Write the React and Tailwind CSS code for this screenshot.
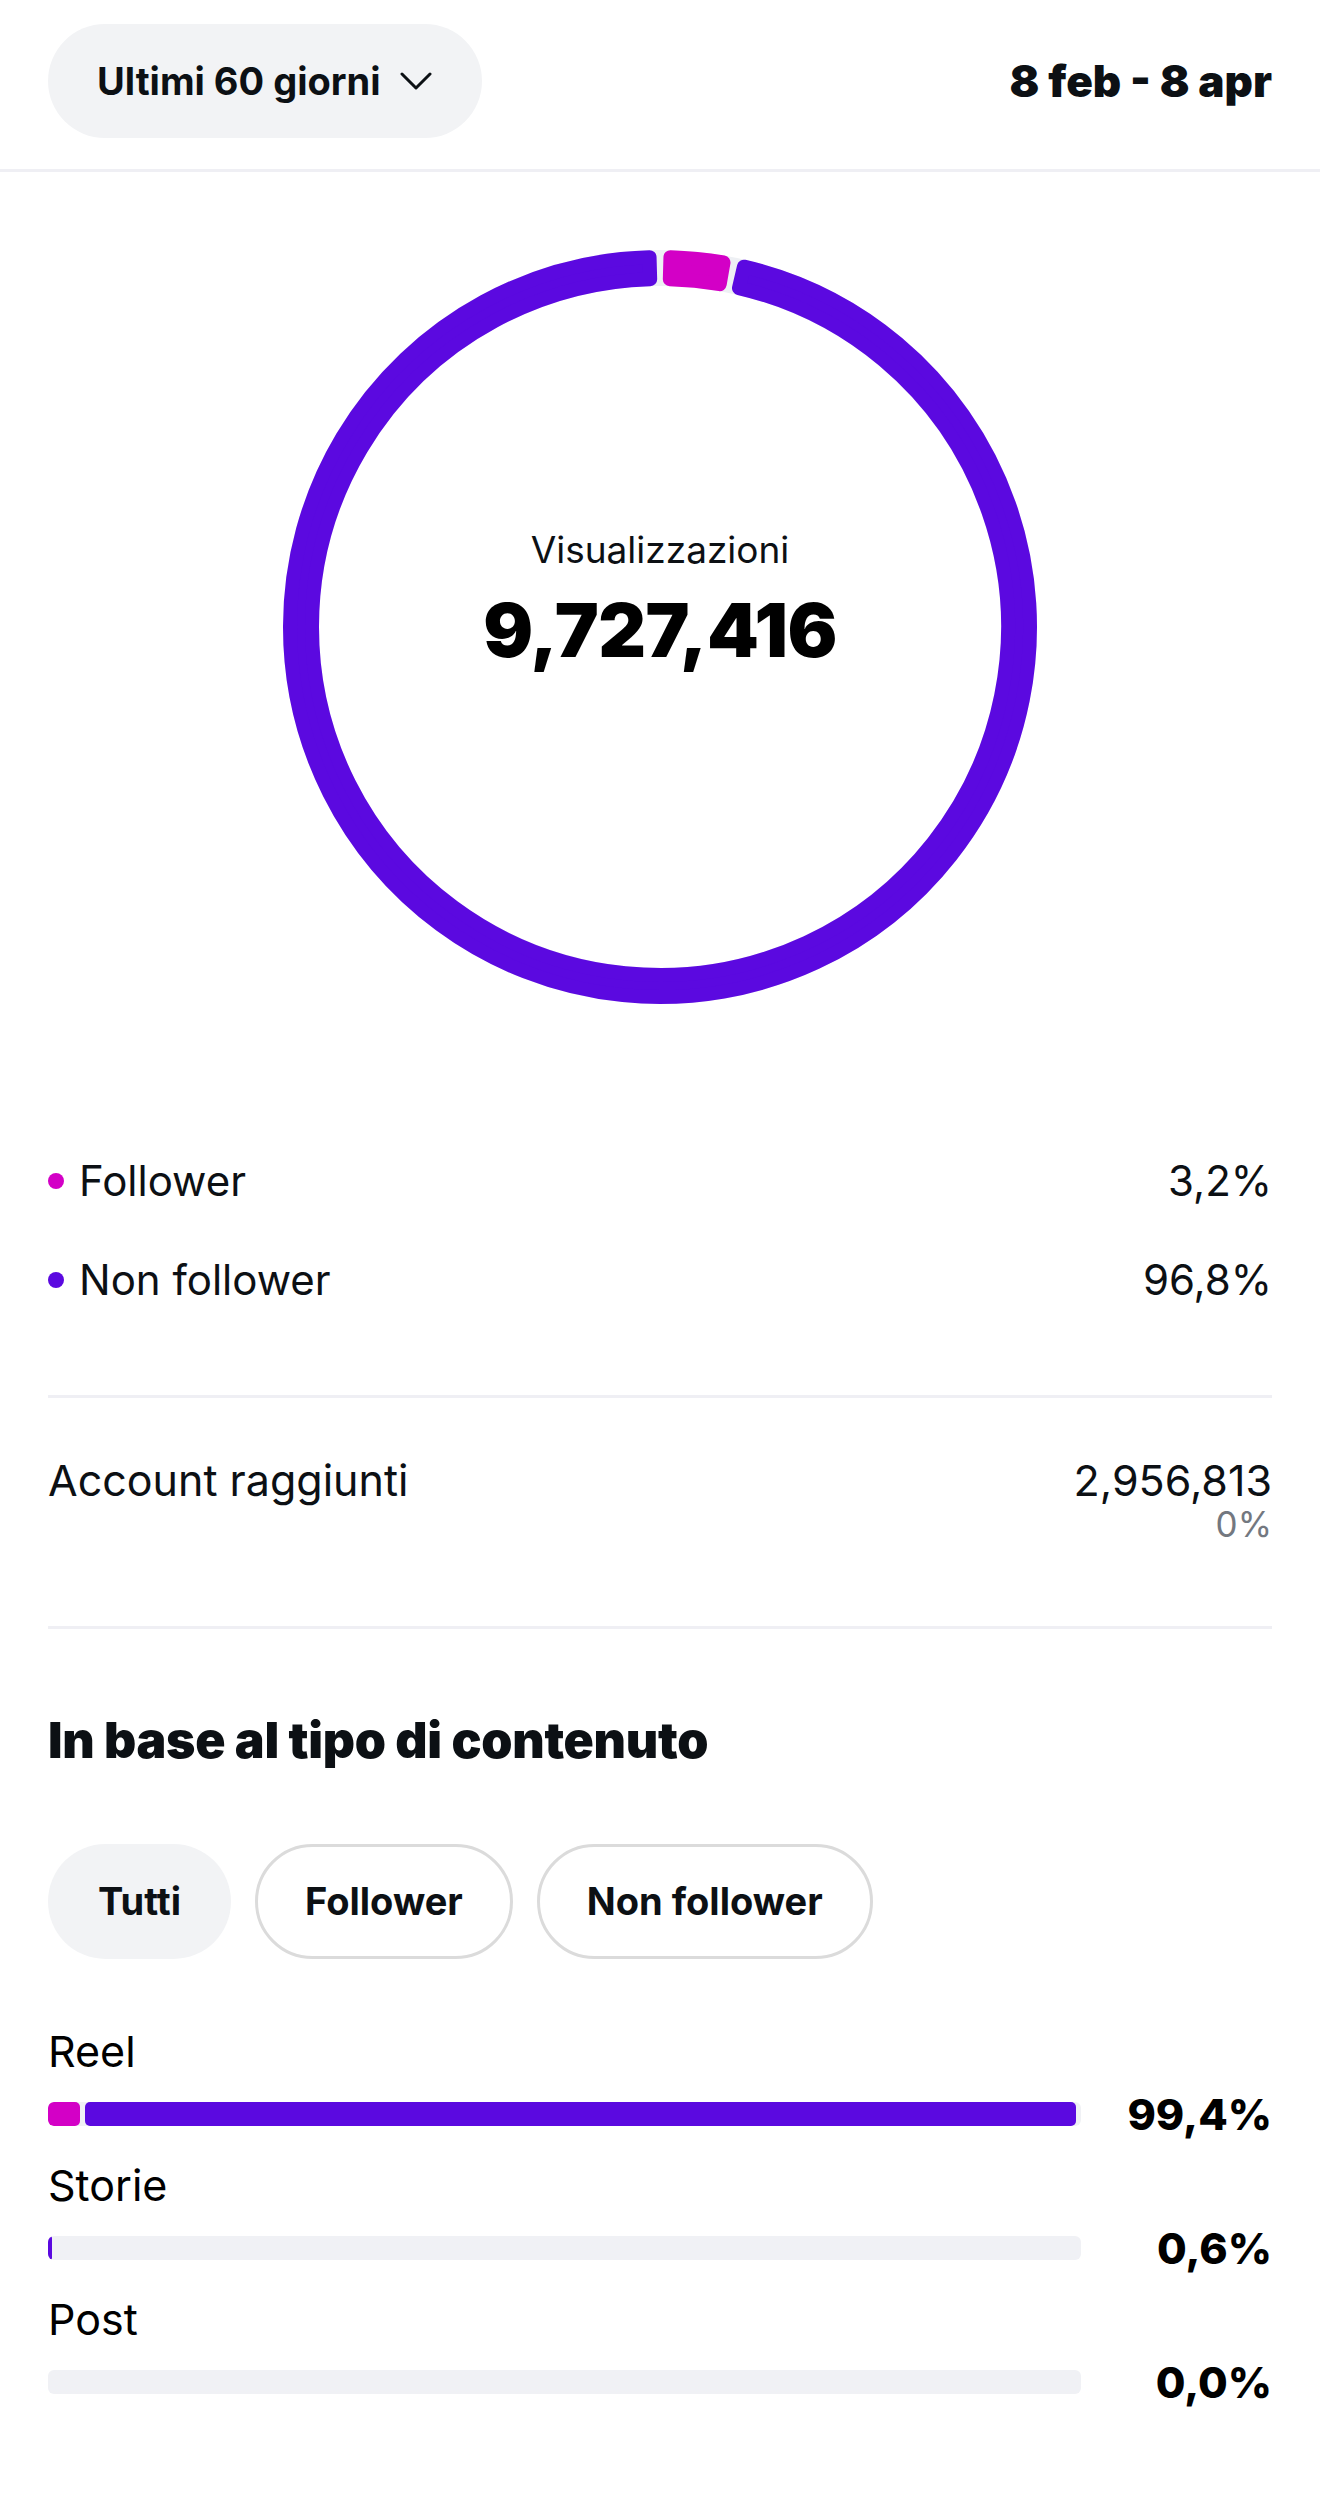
import React from 'react';

const PURPLE = '#5b09e0';
const PINK = '#d300c6';

function polar(cx, cy, r, deg) {
    const a = (deg - 90) * Math.PI / 180;
    return [cx + r * Math.cos(a), cy + r * Math.sin(a)];
}

// annular sector, shrunk by k so a round-joined stroke of 2k gives soft corners
function sector(a1, a2, rIn, rOut, k) {
    const cx = 380, cy = 380;
    const ro = rOut - k, ri = rIn + k;
    const d = (k / ((rIn + rOut) / 2)) * 180 / Math.PI;
    const s = a1 + d, e = a2 - d;
    const large = e - s > 180 ? 1 : 0;
    const [x1, y1] = polar(cx, cy, ro, s);
    const [x2, y2] = polar(cx, cy, ro, e);
    const [x3, y3] = polar(cx, cy, ri, e);
    const [x4, y4] = polar(cx, cy, ri, s);
    return `M${x1} ${y1} A${ro} ${ro} 0 ${large} 1 ${x2} ${y2} L${x3} ${y3} A${ri} ${ri} 0 ${large} 0 ${x4} ${y4} Z`;
}

function Donut() {
    return (
        <div className="relative w-[760px] h-[760px]">
            <svg width="760" height="760" viewBox="0 0 760 760">
                <circle cx="380" cy="380" r="359" fill="none" stroke="#eef0f4" strokeWidth="36" />
                <path d={sector(12.0, 359.5, 341, 377, 7)} fill={PURPLE} stroke={PURPLE} strokeWidth="14" strokeLinejoin="round" />
                <path d={sector(0.5, 11.0, 341, 377, 7)} fill={PINK} stroke={PINK} strokeWidth="14" strokeLinejoin="round" />
            </svg>
            <div className="absolute inset-0 flex flex-col items-center justify-center pb-[52px]">
                <p className="text-[37px] leading-[40px] text-[#0c1014]">Visualizzazioni</p>
                <p className="mt-[18px] text-[74px] leading-[84px] font-black text-black tracking-[-0.5px]">9,727,416</p>
            </div>
        </div>
    );
}

function Bar({ label, value, follower, nonFollower }) {
    return (
        <div className="mb-[22px]">
            <p className="text-[43px] leading-[48px] text-black">{label}</p>
            <div className="flex items-center h-[50px] mt-[14px]">
                <div className="flex-1 h-[24px] rounded-[6px] bg-[#f0f1f5] flex overflow-hidden">
                    {follower > 0 && (
                        <div className="h-full rounded-[5px] mr-[5px]" style={{ width: `${follower}%`, background: PINK }} />
                    )}
                    {nonFollower > 0 && (
                        <div className="h-full rounded-[5px]" style={{ width: `${nonFollower}%`, background: PURPLE }} />
                    )}
                </div>
                <p className="w-[191px] text-right text-[43px] font-extrabold text-black leading-[50px]">{value}</p>
            </div>
        </div>
    );
}

export default function App() {
    return (
        <div className="min-h-screen bg-white font-['Inter',sans-serif] text-[#0c1014]">
            {/* Header */}
            <div className="flex items-center justify-between px-[48px] pt-[24px] pb-[31px] border-b-[3px] border-[#efeff4]">
                <button className="flex items-center h-[114px] pl-[49px] pr-[50px] rounded-full bg-[#f2f3f5]">
                    <span className="text-[38px] font-bold leading-none">Ultimi 60 giorni</span>
                    <svg className="ml-[20px]" width="32" height="18" viewBox="0 0 32 18" fill="none">
                        <polyline points="2,2 16,16 30,2" stroke="#0c1014" strokeWidth="3" strokeLinecap="round" strokeLinejoin="round" />
                    </svg>
                </button>
                <span className="text-[44px] font-black leading-none">8 feb - 8 apr</span>
            </div>

            {/* Donut */}
            <div className="flex justify-center mt-[75px]">
                <Donut />
            </div>

            {/* Legend */}
            <div className="px-[48px] mt-[124px]">
                <div className="flex items-center justify-between h-[99px]">
                    <div className="flex items-center">
                        <span className="w-[16px] h-[16px] rounded-full mr-[15px]" style={{ background: PINK }} />
                        <span className="text-[42px]">Follower</span>
                    </div>
                    <span className="text-[42px]">3,2%</span>
                </div>
                <div className="flex items-center justify-between h-[99px]">
                    <div className="flex items-center">
                        <span className="w-[16px] h-[16px] rounded-full mr-[15px]" style={{ background: PURPLE }} />
                        <span className="text-[42px]">Non follower</span>
                    </div>
                    <span className="text-[42px]">96,8%</span>
                </div>

                <div className="h-[3px] bg-[#efeff4] mt-[66px]" />

                {/* Account raggiunti */}
                <div className="flex justify-between pt-[58px] pb-[82px]">
                    <span className="text-[43px] leading-[48px]">Account raggiunti</span>
                    <div className="flex flex-col items-end">
                        <span className="text-[43px] leading-[48px]">2,956,813</span>
                        <span className="text-[35px] leading-[40px] text-[#737880]">0%</span>
                    </div>
                </div>

                <div className="h-[3px] bg-[#efeff4]" />

                <h2 className="mt-[83px] text-[50px] leading-[56px] font-black tracking-[-0.3px]">In base al tipo di contenuto</h2>

                {/* Chips */}
                <div className="flex gap-[24px] mt-[76px]">
                    <button className="h-[115px] px-[50px] rounded-full bg-[#f2f3f5] text-[38px] font-bold">Tutti</button>
                    <button className="h-[115px] px-[47px] rounded-full border-[3px] border-[#dbdbdb] text-[38px] font-bold">Follower</button>
                    <button className="h-[115px] px-[47px] rounded-full border-[3px] border-[#dbdbdb] text-[38px] font-bold">Non follower</button>
                </div>

                {/* Bars */}
                <div className="mt-[68px]">
                    <Bar label="Reel" value="99,4%" follower={3.1} nonFollower={95.9} />
                    <Bar label="Storie" value="0,6%" follower={0} nonFollower={0.4} />
                    <Bar label="Post" value="0,0%" follower={0} nonFollower={0} />
                </div>
            </div>
        </div>
    );
}
